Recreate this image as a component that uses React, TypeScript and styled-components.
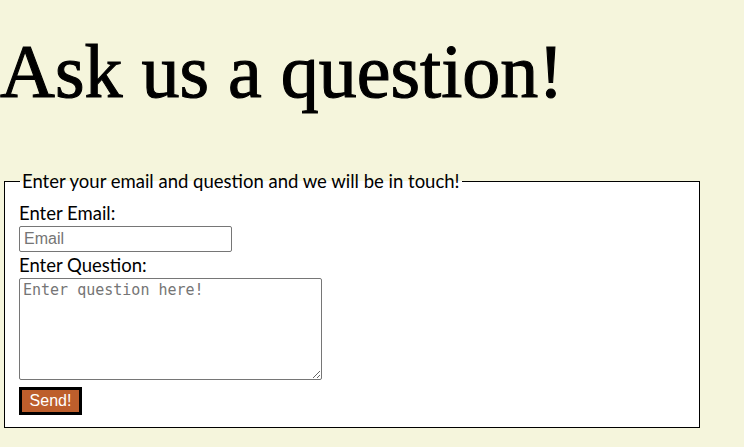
import React from "react";
import styled, { createGlobalStyle } from "styled-components";

const GlobalStyle = createGlobalStyle`
  html, body {
    margin: 0;
    padding: 0;
    background: #f5f5dc;
  }
  body {
    font-family: "Lato", "Noto Sans", sans-serif;
    color: #000;
  }
`;

const Page = styled.main`
  display: flex;
  flex-direction: column;
  padding-bottom: 20px;
`;

const Title = styled.h1`
  font-family: "Liberation Serif", "DejaVu Serif", serif;
  font-weight: 400;
  font-size: 76px;
  line-height: 1;
  margin: 33px 0 60px 0;
  -webkit-text-stroke: 1.1px #000;
`;

const Fieldset = styled.fieldset`
  box-sizing: border-box;
  width: 696px;
  margin: 0 0 0 4px;
  padding: 7px 15px 12px 14px;
  border: 1px solid #000;
  background: #fff;
  font-size: 18.5px;
  display: flex;
  flex-direction: column;
  align-items: flex-start;
`;

const Legend = styled.legend`
  padding: 0 2px;
  font-size: 18.5px;
  line-height: 24px;
  margin-left: 1px;
`;

const Label = styled.label`
  display: block;
  line-height: 26px;
  font-size: 18.5px;
`;

const EmailInput = styled.input`
  box-sizing: border-box;
  width: 213px;
  height: 26px;
  border: 1px solid #767676;
  border-radius: 2px;
  padding: 1px 4px;
  font-family: "Liberation Sans", Arial, sans-serif;
  font-size: 16px;
  background: #fff;
  &::placeholder {
    color: #757575;
  }
`;

const QuestionArea = styled.textarea`
  box-sizing: border-box;
  width: 303px;
  height: 102px;
  border: 1px solid #767676;
  border-radius: 2px;
  padding: 2px 3px;
  font-family: "DejaVu Sans Mono", "Liberation Mono", monospace;
  font-size: 15px;
  background: #fff;
  margin: 0 0 7px 0;
  &::placeholder {
    color: #757575;
  }
`;

const SendButton = styled.button`
  box-sizing: border-box;
  width: 63px;
  height: 28px;
  border: 3px solid #000;
  background: #bd5e2c;
  color: #fff;
  font-family: "Liberation Sans", Arial, sans-serif;
  font-size: 16px;
  padding: 0;
  cursor: pointer;
`;

export default function App() {
  return (
    <Page>
      <GlobalStyle />
      <Title>Ask us a question!</Title>
      <Fieldset>
        <Legend>Enter your email and question and we will be in touch!</Legend>
        <Label htmlFor="email">Enter Email:</Label>
        <EmailInput id="email" type="email" placeholder="Email" />
        <Label htmlFor="question">Enter Question:</Label>
        <QuestionArea id="question" placeholder="Enter question here!" />
        <SendButton type="submit">Send!</SendButton>
      </Fieldset>
    </Page>
  );
}
